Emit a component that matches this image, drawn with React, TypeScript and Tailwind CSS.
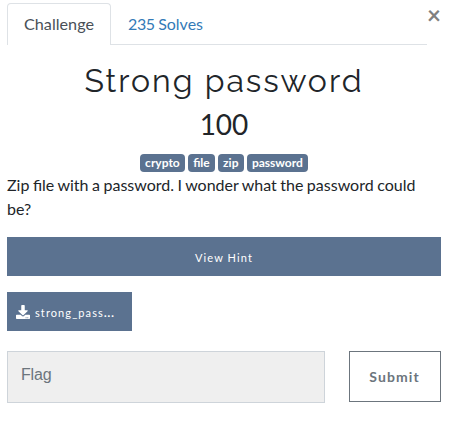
const tags = ["crypto", "file", "zip", "password"];

function DownloadIcon() {
  return (
    <svg viewBox="0 0 512 512" className="h-[14px] w-[14px] shrink-0" fill="currentColor" aria-hidden="true">
      <path d="M216 0h80c13.300 0 24 10.700 24 24v168h87.700c17.800 0 26.700 21.500 14.100 34.100L269.700 378.300c-7.500 7.500-19.800 7.500-27.300 0L90.100 226.100c-12.600-12.600-3.700-34.100 14.100-34.100H192V24c0-13.300 10.700-24 24-24zm296 376v112c0 13.300-10.700 24-24 24H24c-13.300 0-24-10.700-24-24V376c0-13.300 10.700-24 24-24h146.700l49 49c20.100 20.100 52.500 20.100 72.600 0l49-49H488c13.300 0 24 10.700 24 24zm-124 88c0-11-9-20-20-20s-20 9-20 20 9 20 20 20 20-9 20-20zm64 0c0-11-9-20-20-20s-20 9-20 20 9 20 20 20 20-9 20-20z" />
    </svg>
  );
}

export default function App() {
  return (
    <main className="h-[426px] w-[454px] overflow-hidden bg-white pl-[7px] pr-[13px] pt-[3px] font-['Lato',sans-serif] text-base text-[#212529]">
      <header className="flex">
        <nav className="flex h-[42px] w-[420px] border-b border-[#dee2e6]">
          <button className="-mb-px h-[42px] w-[104px] rounded-t border border-b-0 border-[#dee2e6] bg-white pb-px text-[16.2px] leading-6 text-[#495057]">
            Challenge
          </button>
          <button className="h-[41px] px-[17px] text-[#337ab7] [word-spacing:-0.6px]">
            <span className="tracking-[-0.4px]">235</span> Solves
          </button>
        </nav>
        <button
          aria-label="Close"
          className="flex h-6 w-[14px] items-center justify-center text-2xl font-bold leading-6 text-[#808080]"
        >
          ×
        </button>
      </header>

      <section>
        <h3 className="mt-[17px] whitespace-nowrap text-center font-['Raleway','Lato',sans-serif] text-[32px] font-normal leading-[38px] tracking-[2px]">
          Strong password
        </h3>
        <h4 className="mt-[5px] text-center text-[28px] leading-[38px]">100</h4>
        <div className="mt-[11px] flex h-[18px] justify-center gap-[3px]">
          {tags.map((tag) => (
            <span key={tag} className="rounded bg-[#5b7290] px-[5.2px] text-xs font-bold leading-[18px] text-white">
              {tag}
            </span>
          ))}
        </div>
        <p className="mt-px leading-6 [word-spacing:-0.6px]">
          Zip file with a password. I wonder what the password could be?
        </p>
      </section>

      <button className="mt-4 h-[39px] w-full bg-[#5b7290] pt-[3px] text-[11px] tracking-[1.1px] text-white">
        View Hint
      </button>
      <button className="mt-4 flex h-[39px] w-[125px] items-center bg-[#5b7290] pl-[9px] text-white">
        <DownloadIcon />
        <span className="ml-[5px] mt-[3px] text-[11px] tracking-[1.1px]">strong_pass<b className="font-black">...</b></span>
      </button>

      <form className="mt-5 flex justify-between">
        <input
          placeholder="Flag"
          className="h-[52px] w-[318px] border border-[#ced4da] bg-[#efefef] px-[13px] pb-[5px] font-['Liberation_Sans',sans-serif] text-base tracking-[-0.2px] outline-none placeholder:text-[#6c757d]"
        />
        <button type="button" className="h-[51px] w-[92px] border border-[#6c757d] pr-px text-sm font-bold tracking-[1.1px] text-[#6c757d]">
          Submit
        </button>
      </form>
    </main>
  );
}
